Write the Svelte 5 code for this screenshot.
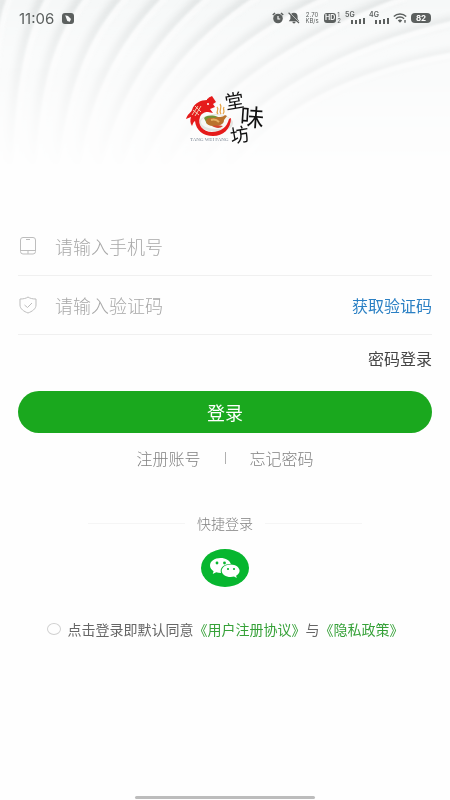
<script>
  let phone = $state('');
  let code = $state('');
  let agreed = $state(false);

  const networks = ['5G', '4G'];

  // ridges of the header backdrop, left to right
  const ridges = [
    'M4 -4 C-6 22 -12 60 -14 170',
    'M43 -4 C24 30 12 80 10 170',
    'M82 -4 C52 34 36 84 33 170',
    'M121 -4 C82 38 62 96 56 170',
    'M160 -4 C110 46 84 104 77 170',
    'M203 -4 C142 48 110 110 98 170',
    'M252 -4 C176 46 136 108 118 170',
    'M322 -4 C222 42 166 104 138 170',
    'M400 -4 C276 42 200 100 162 170',
    'M454 20 C330 48 248 98 196 170',
    'M454 52 C370 66 280 98 226 170'
  ];
</script>

<main class="page">
  <svg class="backdrop" viewBox="0 0 450 170" preserveAspectRatio="none" aria-hidden="true">
    <defs>
      <linearGradient id="fade" x1="0" y1="0" x2="0" y2="1">
        <stop offset="0" stop-color="#fff" />
        <stop offset="0.3" stop-color="#fff" stop-opacity="0.6" />
        <stop offset="0.7" stop-color="#fff" stop-opacity="0.2" />
        <stop offset="1" stop-color="#fff" stop-opacity="0" />
      </linearGradient>
      <mask id="fade-mask">
        <rect width="450" height="170" fill="url(#fade)" />
      </mask>
      <filter id="soft" x="-20%" y="-20%" width="140%" height="140%">
        <feGaussianBlur stdDeviation="3" />
      </filter>
      <filter id="edge" x="-20%" y="-20%" width="140%" height="140%">
        <feGaussianBlur stdDeviation="1" />
      </filter>
    </defs>
    <g mask="url(#fade-mask)" fill="none">
      <rect width="450" height="170" fill="#f6f8f8" />
      {#each ridges as d}
        <path {d} stroke="#e0e3e3" stroke-width="8" filter="url(#soft)" />
        <path {d} stroke="#f9fafa" stroke-width="6" transform="translate(6 2)" filter="url(#edge)" />
      {/each}
    </g>
  </svg>

  <header class="status-bar">
    <span class="time">11:06</span>
    <svg width="12" height="11" viewBox="0 0 12 11" aria-hidden="true">
      <rect width="12" height="11" rx="3" fill="#5c605f" />
      <path d="M3.2 2.2 6 3l3 3-1.2 2.7-2.5-.8z" fill="#f7f8f8" />
    </svg>

    <div class="status-icons">
      <svg width="12" height="12" viewBox="0 0 12 12" aria-hidden="true">
        <circle cx="6" cy="6.5" r="4.8" fill="#5c605f" />
        <path d="M.8 3 3 1M11.2 3 9 1" stroke="#5c605f" stroke-width="1.6" />
        <path d="M6 4v3h2.2" fill="none" stroke="#f7f8f8" stroke-width="1.2" />
      </svg>
      <svg width="12" height="12" viewBox="0 0 12 12" aria-hidden="true">
        <path d="M6 .8C3.500 .8 2.400 2.500 2.400 4.400V7L.8 9.200h10.400L9.600 7V4.400C9.600 2.500 8.500 .8 6 .8zM4.400 9.800a1.600 1.600 0 0 0 3.200 0z" fill="#5c605f" />
        <path d="M1.600 .8 12 11" stroke="#f7f8f8" stroke-width="1" />
        <path d="M.6 .8 11 11" stroke="#5c605f" stroke-width="1.200" />
      </svg>
      <span class="speed"><span>2.70</span><span>KB/s</span></span>
      <span class="hd">
        <span class="hd-badge">HD</span>
        <span class="hd-sims"><span>1</span><span>2</span></span>
      </span>
      {#each networks as name}
        <span class="network">
          <span class="network-name">{name}</span>
          <svg width="14" height="6" viewBox="0 0 14 6" aria-hidden="true">
            <path d="M0 2h2v4H0zM4 2h2v4H4zM8 1h2v5H8zM12 0h2v6h-2z" fill="#5c605f" />
          </svg>
        </span>
      {/each}
      <svg width="14" height="10" viewBox="0 0 14 10" aria-hidden="true">
        <path d="M.8 3.600C4.200 .2 9.800 .2 13.200 3.600M2.900 5.700c2.300-2.200 5.900-2.200 8.200 0" fill="none" stroke="#5c605f" stroke-width="1.400" />
        <path d="M4.800 7.400c1.200-1.200 3.200-1.200 4.400 0L7 9.700zM11.300 7h1.400v2.800h-1.400z" fill="#5c605f" />
      </svg>
      <span class="battery">82</span>
    </div>
  </header>

  <svg class="logo" width="90" height="76" viewBox="-6 -12 90 76" role="img" aria-label="堂味坊">
    <!-- plate and food -->
    <ellipse cx="30" cy="33" rx="17" ry="9" fill="#e3e5e1" />
    <ellipse cx="30" cy="32" rx="15" ry="7" fill="#f8f8f5" />
    <path d="M18 28c3-3 9-3 14-1l-2 6-9 1z" fill="#719337" />
    <path d="M20 31c0-3 4-4 8-3 5-2 8 0 11-3l2 1-3 4c0 4-4 6-10 6-5 0-8-2-8-5z" fill="#b9722c" />
    <path d="M25 30c3-1 6 0 8 2" fill="none" stroke="#e6af62" stroke-width="2" />
    <path d="M26 36c4-1 8-1 11 0-3 3-8 2-11 0z" fill="#d5452b" />
    <!-- steam -->
    <path d="M32 24c-3-3 2-4-1-7M35 24c-3-4 2-6-1-10M37 24c3-3-1-4 1-7" fill="none" stroke="#e6a54a" stroke-width="1.300" />
    <!-- fish -->
    <path d="M21 10C15 10 8 13 6 20c-1 3-4 3-6 9l5-2c-1 3-1 6 1 9 1-2 1-4 3-5 1 9 8 15 18 15 10 0 18-7 18-18l-2 1c-2 8-8 13-17 13-9 0-15-7-12-15 1-3 4-5 8-5l5 1-3-4 5-2-2-3 3-2-2-3-2-3-2 1c-1 0-2 2-3 2z" fill="#e51b1b" />
    <path d="M7 20l6 5M9 16l6 6M6 25l6-9M9 26l6-10" stroke="#f5c7ad" stroke-width="1" />
    <circle cx="22" cy="14" r="1" fill="#fff" />
    <text class="brush" x="39" y="18" font-size="19" transform="rotate(-10 48 12)">堂</text>
    <text class="brush" x="54" y="36" font-size="24" transform="rotate(4 66 27)">味</text>
    <text class="brush" x="44" y="52" font-size="19" transform="rotate(-10 53 44)">坊</text>
    <text class="pinyin" x="4" y="51">TANG WEI FANG</text>
  </svg>

  <form class="login" onsubmit={(e) => e.preventDefault()}>
    <div class="field">
      <svg width="20" height="18" viewBox="0 0 20 18" fill="none" stroke="#bdbdbd" aria-hidden="true">
        <rect x="2.500" y=".5" width="15" height="16.500" rx="2.500" />
        <path d="M2.500 13.500h15M10 13.500V17M8 2.500h4" />
      </svg>
      <input type="tel" aria-label="手机号" placeholder="请输入手机号" bind:value={phone} />
    </div>
    <div class="field">
      <svg width="20" height="18" viewBox="0 0 20 18" fill="none" stroke="#bdbdbd" aria-hidden="true">
        <path d="M10 1C8 2.500 5 3 2 3v6c0 4 4 6.500 8 8 4-1.500 8-4 8-8V3c-3 0-6-.5-8-2z" />
        <path d="M6.500 9 9.500 11.500 14 7" />
      </svg>
      <input type="text" aria-label="验证码" placeholder="请输入验证码" bind:value={code} />
      <button type="button" class="get-code">获取验证码</button>
    </div>

    <a class="password-login" href="#password">密码登录</a>
    <button type="submit" class="submit">登录</button>
  </form>

  <nav class="links">
    <a href="#register">注册账号</a>
    <span class="bar"></span>
    <a href="#forgot">忘记密码</a>
  </nav>

  <section class="quick">
    <div class="quick-title">快捷登录</div>
    <button type="button" class="wechat" aria-label="微信登录">
      <svg width="48" height="38" viewBox="0 0 48 38" aria-hidden="true">
        <ellipse cx="24" cy="19" rx="24" ry="19" fill="#07b62f" />
        <path d="M19.500 9C13.500 9 9 12.300 9 16.500c0 2.400 1.400 4.300 3.600 5.700l-.9 2.800 3.500-1.700c1.500.5 3 .7 4.800.7a6 6 0 0 1-.3-2c0-4 4.100-7 9.300-7h.8C28.900 11.500 24.700 9 19.500 9z" fill="#fff" />
        <path d="M29.700 15.500c-5 0-9 2.900-9 6.300s4 6.300 9 6.300c1.200 0 2.300-.2 3.300-.5l2.800 1.500-.7-2.400c2.100-1.200 3.500-2.900 3.500-4.900 0-3.400-4-6.300-8.900-6.300z" fill="#fff" />
        <circle cx="16" cy="14" r="1.400" fill="#07b62f" />
        <circle cx="23.500" cy="14" r="1.400" fill="#07b62f" />
        <circle cx="27" cy="20" r="1.100" fill="#07b62f" />
        <circle cx="33" cy="20" r="1.100" fill="#07b62f" />
      </svg>
    </button>
  </section>

  <div class="agreement">
    <input id="agree" type="checkbox" bind:checked={agreed} />
    <label for="agree">点击登录即默认同意</label><a href="#terms">《用户注册协议》</a><span>与</span><a href="#privacy">《隐私政策》</a>
  </div>

  <div class="home-indicator"></div>
</main>

<style>
  :global(body) {
    margin: 0;
    background: #fefefe;
  }

  .page {
    position: relative;
    display: flex;
    flex-direction: column;
    min-height: 100vh;
    font-family: 'Noto Sans CJK SC', sans-serif;
    color: #666;
  }

  .backdrop {
    position: absolute;
    top: 0;
    left: 0;
    z-index: -1;
    width: 100%;
    height: 170px;
  }

  a {
    color: inherit;
    text-decoration: none;
  }

  button {
    padding: 0;
    border: 0;
    background: none;
    font-family: inherit;
    cursor: pointer;
  }

  .status-bar {
    display: flex;
    align-items: center;
    gap: 8px;
    height: 36px;
    padding: 0 19px;
    font-family: Inter, sans-serif;
    color: #5c605f;
  }

  .time {
    font-size: 15px;
  }

  .status-icons {
    display: flex;
    align-items: center;
    gap: 4px;
    margin-left: auto;
  }

  .speed,
  .hd-sims {
    display: flex;
    flex-direction: column;
    font-size: 6px;
    line-height: 6px;
  }

  .speed {
    width: 16px;
    text-align: center;
  }

  .hd {
    display: flex;
    align-items: center;
    gap: 1px;
  }

  .hd-badge {
    padding: 0 1px;
    border-radius: 3px;
    background: #5c605f;
    color: #f7f8f8;
    font-size: 7px;
    font-weight: 700;
    line-height: 10px;
  }

  .network {
    display: flex;
    flex-direction: column;
    align-items: flex-end;
    width: 20px;
  }

  .network-name {
    align-self: flex-start;
    font-size: 7px;
    font-weight: 600;
    line-height: 6px;
  }

  .battery {
    width: 20px;
    border-radius: 4px;
    background: #5c605f;
    color: #fff;
    font-size: 8px;
    font-weight: 700;
    line-height: 10px;
    text-align: center;
  }

  .logo {
    align-self: center;
    margin-top: 42px;
  }

  .brush {
    font-weight: 400;
    fill: #111;
  }

  .pinyin {
    font-family: 'Liberation Serif', serif;
    font-size: 5px;
    fill: #7c8794;
  }

  .login {
    display: flex;
    flex-direction: column;
    margin-top: 63px;
    padding: 0 18px;
  }

  .field {
    display: flex;
    align-items: center;
    height: 58px;
    border-bottom: 1px solid #f0f0f0;
  }

  .field input {
    flex: 1;
    min-width: 0;
    margin-left: 17px;
    padding: 0;
    border: 0;
    outline: 0;
    background: none;
    font-family: inherit;
    font-size: 18px;
    font-weight: 300;
    color: #333;
  }

  .field input::placeholder {
    color: #a8a8a8;
    opacity: 1;
  }

  .get-code {
    font-size: 16px;
    color: #2b80c4;
  }

  .password-login {
    align-self: flex-end;
    margin-bottom: 10px;
    font-size: 16px;
    line-height: 46px;
    color: #444;
  }

  .submit {
    height: 42px;
    border-radius: 21px;
    background: #1aa81e;
    font-size: 18px;
    color: #fff;
  }

  .links {
    display: flex;
    align-items: center;
    justify-content: center;
    gap: 24px;
    height: 50px;
    font-size: 16px;
    font-weight: 300;
    color: #808080;
  }

  .bar {
    width: 1px;
    height: 12px;
    background: #b0b0b0;
  }

  .quick {
    display: flex;
    flex-direction: column;
    align-items: center;
    gap: 14px;
    margin-top: 28px;
  }

  .quick-title {
    display: flex;
    align-items: center;
    justify-content: center;
    gap: 12px;
    width: 61%;
    font-size: 14px;
    font-weight: 300;
    line-height: 24px;
    color: #808080;
  }

  .quick-title::before,
  .quick-title::after {
    content: '';
    flex: 1;
    height: 1px;
    background: #f5f5f5;
  }

  .wechat,
  .wechat svg {
    display: block;
  }

  .agreement {
    display: flex;
    align-items: center;
    justify-content: center;
    margin-top: 32px;
    font-size: 14px;
    line-height: 20px;
    white-space: nowrap;
  }

  .agreement input {
    appearance: none;
    width: 14px;
    height: 12px;
    margin: 0 7px 0 0;
    border: 1px solid #d0d0d0;
    border-radius: 50%;
  }

  .agreement input:checked {
    border-color: #1aa81e;
    background: #1aa81e;
  }

  .agreement a {
    color: #36a138;
  }

  .home-indicator {
    align-self: center;
    width: 40%;
    height: 3px;
    margin: auto 0 1px;
    border-radius: 2px;
    background: #bcbcbc;
  }
</style>
